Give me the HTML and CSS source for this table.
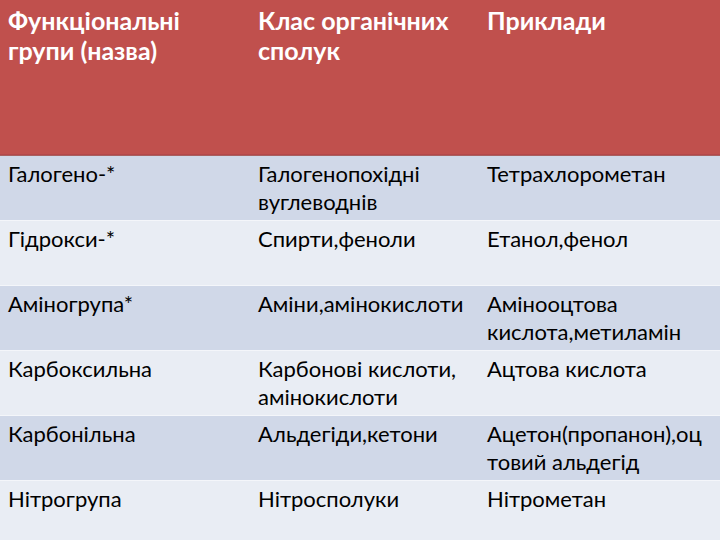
FILE: index.html
```html
<!DOCTYPE html>
<html lang="uk">
<head>
<meta charset="utf-8">
<link rel="stylesheet" href="styles.css">
</head>
<body>
<div class="table">
  <div class="row head">
    <div class="cell c1">Функціональні групи (назва)</div>
    <div class="cell c2">Клас органічних сполук</div>
    <div class="cell c3">Приклади</div>
  </div>
  <div class="row dark">
    <div class="cell c1">Галогено-*</div>
    <div class="cell c2">Галогенопохідні вуглеводнів</div>
    <div class="cell c3">Тетрахлорометан</div>
  </div>
  <div class="row light">
    <div class="cell c1">Гідрокси-*</div>
    <div class="cell c2">Спирти,феноли</div>
    <div class="cell c3">Етанол,фенол</div>
  </div>
  <div class="row dark">
    <div class="cell c1">Аміногрупа*</div>
    <div class="cell c2">Аміни,амінокислоти</div>
    <div class="cell c3">Амінооцтова кислота,метиламін</div>
  </div>
  <div class="row light">
    <div class="cell c1">Карбоксильна</div>
    <div class="cell c2">Карбонові кислоти, амінокислоти</div>
    <div class="cell c3">Ацтова кислота</div>
  </div>
  <div class="row dark">
    <div class="cell c1">Карбонільна</div>
    <div class="cell c2">Альдегіди,кетони</div>
    <div class="cell c3">Ацетон(пропанон),оц товий альдегід</div>
  </div>
  <div class="row light last">
    <div class="cell c1">Нітрогрупа</div>
    <div class="cell c2">Нітросполуки</div>
    <div class="cell c3">Нітрометан</div>
  </div>
</div>
</body>
</html>
```
FILE: styles.css
```css
html, body {
  margin: 0;
  padding: 0;
  width: 720px;
  height: 540px;
  overflow: hidden;
  background: #e9edf4;
}
.table {
  display: flex;
  flex-direction: column;
  font-family: Lato, "Open Sans", sans-serif;
  color: #000;
}
.row {
  display: grid;
  grid-template-columns: 250px 230px 240px;
  height: 64px;
  border-bottom: 1px solid #f4f6fa;
}
.head {
  height: 155px;
  background: #c0504d;
  color: #fff;
  font-weight: bold;
  border-bottom: 1px solid #a8605e;
  box-shadow: inset 0 -1px 0 #b4474a;
}
.dark { background: #d0d8e8; }
.light { background: #e9edf4; }
.row.last { border-bottom: none; }
.cell {
  padding: 4px 6px 0 8px;
  font-size: 22px;
  line-height: 28px;
}
.head .cell {
  padding-top: 5px;
  font-size: 25px;
  line-height: 30px;
}
.c3 { padding-left: 7px; }
```
